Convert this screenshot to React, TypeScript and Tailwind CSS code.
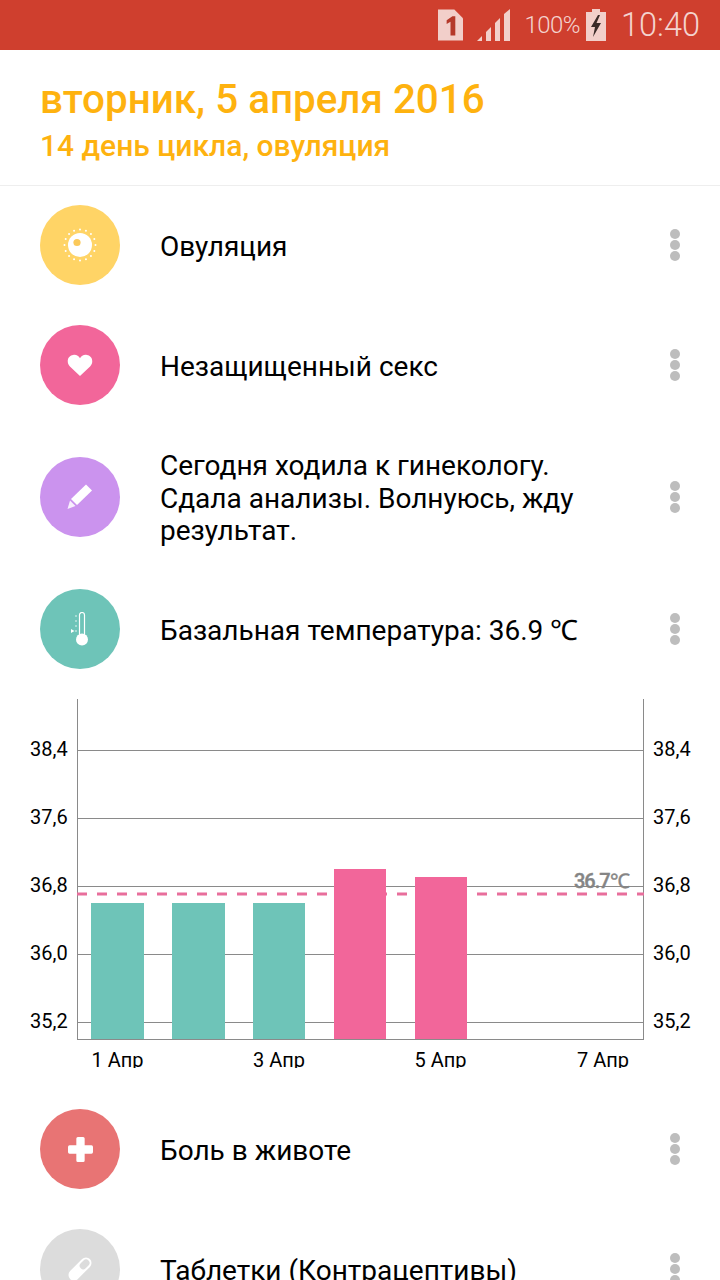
import type { ReactNode } from 'react'

const font = { fontFamily: 'Roboto, sans-serif' }

function Kebab() {
  return (
    <div className="flex w-[10px] flex-col gap-[1px]">
      <div className="h-[10px] w-[10px] rounded-full bg-[#bdbdbd]" />
      <div className="h-[10px] w-[10px] rounded-full bg-[#bdbdbd]" />
      <div className="h-[10px] w-[10px] rounded-full bg-[#bdbdbd]" />
    </div>
  )
}

function Row({ color, icon, tall, children }: { color: string; icon: ReactNode; tall?: boolean; children: ReactNode }) {
  return (
    <div className={`flex items-center pl-10 pr-10 ${tall ? 'h-[144px]' : 'h-[120px]'}`}>
      <div className={`flex h-20 w-20 shrink-0 items-center justify-center rounded-full ${color}`}>
        {icon}
      </div>
      <div className="ml-10 flex-1 pt-1 text-[28px] leading-[32.500px] text-black">{children}</div>
      <Kebab />
    </div>
  )
}

function Sun() {
  const rays = Array.from({ length: 16 }, (_, i) => (i * Math.PI) / 8)
  return (
    <svg width="34" height="34" viewBox="0 0 34 34" fill="#fff">
      <circle cx="17" cy="17" r="12" />
      <circle cx="14" cy="14.500" r="3.600" fill="#fbc95a" />
      {rays.map((a) => (
        <circle key={a} cx={17 + 15.5 * Math.cos(a)} cy={17 + 15.5 * Math.sin(a)} r="1" />
      ))}
    </svg>
  )
}

function Heart() {
  return (
    <svg width="26" height="22" viewBox="0 0 28 24" fill="#fff">
      <path d="M14 24 L3 13.5 C-1 9.5 0 2 6.5 1 C10 .5 12.5 2 14 4.5 C15.5 2 18 .5 21.5 1 C28 2 29 9.5 25 13.5 Z" />
    </svg>
  )
}

function Pencil() {
  return (
    <svg width="26" height="26" viewBox="0 0 26 26" fill="#fff">
      <path d="M19 0.5 L25 6.5 L10 21 L4 15 Z" />
      <path d="M3 16.5 L8.5 22 L0.5 25 Z" opacity="0.85" />
    </svg>
  )
}

function Thermometer() {
  return (
    <svg width="20" height="34" viewBox="0 0 20 34" fill="none" stroke="#fff">
      <rect x="9.500" y="0.500" width="5" height="24" rx="2.500" strokeWidth="1.200" />
      <circle cx="12" cy="27.500" r="6" fill="#fff" stroke="none" />
      <path d="M5 4h2M5 9h2M5 14h2M5 19h2" strokeWidth="1.200" opacity="0.8" />
      <path d="M1 17l3.500 2-3.500 2z" fill="#fff" stroke="none" />
    </svg>
  )
}

function Plus() {
  return (
    <svg width="25" height="25" viewBox="0 0 24 24" fill="#fff">
      <path d="M8 1.5 a1.500 1.500 0 0 1 1.500 -1.500 h5 a1.500 1.500 0 0 1 1.500 1.500 V8 H22.500 a1.500 1.500 0 0 1 1.500 1.500 v5 a1.500 1.500 0 0 1 -1.500 1.500 H16 V22.500 a1.500 1.500 0 0 1 -1.500 1.500 h-5 a1.500 1.500 0 0 1 -1.500 -1.500 V16 H1.500 a1.500 1.500 0 0 1 -1.500 -1.500 v-5 a1.500 1.500 0 0 1 1.500 -1.500 H8 Z" />
    </svg>
  )
}

function Pill() {
  return (
    <svg width="26" height="26" viewBox="0 0 26 26">
      <g transform="rotate(-45 13 13)">
        <rect x="-1" y="7.500" width="28" height="11" rx="5.500" fill="#fff" />
        <rect x="14" y="9.500" width="11" height="7" rx="3.500" fill="#dcdcdc" />
      </g>
    </svg>
  )
}

function StatusBar() {
  return (
    <div className="flex h-[50px] items-center justify-end bg-[#cf3f2e] pr-[20px] text-[#f4d3ce]">
      <svg width="25" height="32" viewBox="0 0 26 32" className="mr-[14px]">
        <path d="M0 0H17L26 9V32H0Z" fill="#f2cfca" />
        <path d="M9 11l6-4h3v20h-5V12.500l-4 2.500z" fill="#b5392a" />
      </svg>
      <svg width="33" height="32" viewBox="0 0 33 32" fill="#f2cfca" className="mr-[14px]">
        <path d="M0 32 L5 27 V32 Z" />
        <path d="M9 23 L14 18 V32 H9 Z" />
        <path d="M18 14 L23 9 V32 H18 Z" />
        <path d="M27 5 L33 0 V32 H27 Z" />
      </svg>
      <span className="mr-[6px] text-[24px] font-light leading-none tracking-[-0.5px]">100%</span>
      <svg width="20" height="32" viewBox="0 0 20 32" className="mr-[15px]">
        <path d="M6 0H14V3H20V32H0V3H6Z" fill="#f2cfca" />
        <path d="M12 6 L5 18 H9 L7 28 L15 14 H10.500 L14 6 Z" fill="#3a2a28" />
      </svg>
      <span className="text-[32.500px] font-light leading-none">10:40</span>
    </div>
  )
}

const grid = [
  { y: 51, label: '38,4' },
  { y: 119, label: '37,6' },
  { y: 187, label: '36,8' },
  { y: 255, label: '36,0' },
  { y: 323, label: '35,2' },
]

const bars = [
  { x: 91, w: 53, top: 204, color: '#6ec4b8' },
  { x: 172, w: 53, top: 204, color: '#6ec4b8' },
  { x: 253, w: 52, top: 204, color: '#6ec4b8' },
  { x: 334, w: 52, top: 170, color: '#f2669a' },
  { x: 415, w: 52, top: 178, color: '#f2669a' },
]

const dates = [
  { x: 117.5, label: '1 Апр' },
  { x: 279, label: '3 Апр' },
  { x: 440.5, label: '5 Апр' },
  { x: 603, label: '7 Апр' },
]

function Chart() {
  return (
    <svg width="720" height="369" viewBox="0 0 720 369" className="block" fontFamily="Roboto, sans-serif">
      {grid.map((g) => (
        <g key={g.y}>
          <line x1="77" x2="644" y1={g.y + 0.5} y2={g.y + 0.5} stroke="#8a8a8a" />
          <text x="30" y={g.y + 6} fontSize="20" fill="#000">{g.label}</text>
          <text x="653" y={g.y + 6} fontSize="20" fill="#000">{g.label}</text>
        </g>
      ))}
      <line x1="77.5" x2="77.5" y1="0" y2="341" stroke="#8a8a8a" />
      <line x1="643.5" x2="643.5" y1="0" y2="341" stroke="#8a8a8a" />
      <line x1="77" x2="644" y1="340.5" y2="340.5" stroke="#8a8a8a" />
      <line x1="77" x2="644" y1="195" y2="195" stroke="#e86e9c" strokeWidth="3" strokeDasharray="10 10" />
      {bars.map((b) => (
        <rect key={b.x} x={b.x} y={b.top} width={b.w} height={340 - b.top} fill={b.color} />
      ))}
      <text x="574" y="189" fontSize="20" fontWeight="500" letterSpacing="-1" fill="#858585" stroke="#858585" strokeWidth="0.4">36.7℃</text>
      {dates.map((d) => (
        <text key={d.x} x={d.x} y="368" textAnchor="middle" fontSize="20" fill="#000">{d.label}</text>
      ))}
    </svg>
  )
}

export default function App() {
  return (
    <div className="h-[1280px] w-[720px] overflow-hidden bg-white" style={font}>
      <StatusBar />
      <div className="-mb-px h-[136px] border-b border-[#eeeeee] pl-10 pt-[28px]">
        <div className="text-[40.400px] font-medium leading-[44px] text-[#feb20f]">вторник, 5 апреля 2016</div>
        <div className="mt-[6px] text-[30px] font-medium leading-[36px] text-[#feb20f]">14 день цикла, овуляция</div>
      </div>
      <Row color="bg-[#ffd466]" icon={<Sun />}>Овуляция</Row>
      <Row color="bg-[#f2669a]" icon={<Heart />}>Незащищенный секс</Row>
      <Row color="bg-[#cb93ee]" icon={<Pencil />} tall>
        Сегодня ходила к гинекологу.
        <br />
        Сдала анализы. Волнуюсь, жду
        <br />
        результат.
      </Row>
      <Row color="bg-[#6ec4b8]" icon={<Thermometer />}>Базальная температура: 36.9 ℃</Row>
      <div className="pt-[10px] pb-[21px]">
        <Chart />
      </div>
      <Row color="bg-[#e87474]" icon={<Plus />}>Боль в животе</Row>
      <Row color="bg-[#dcdcdc]" icon={<Pill />}>Таблетки (Контрацептивы)</Row>
    </div>
  )
}
